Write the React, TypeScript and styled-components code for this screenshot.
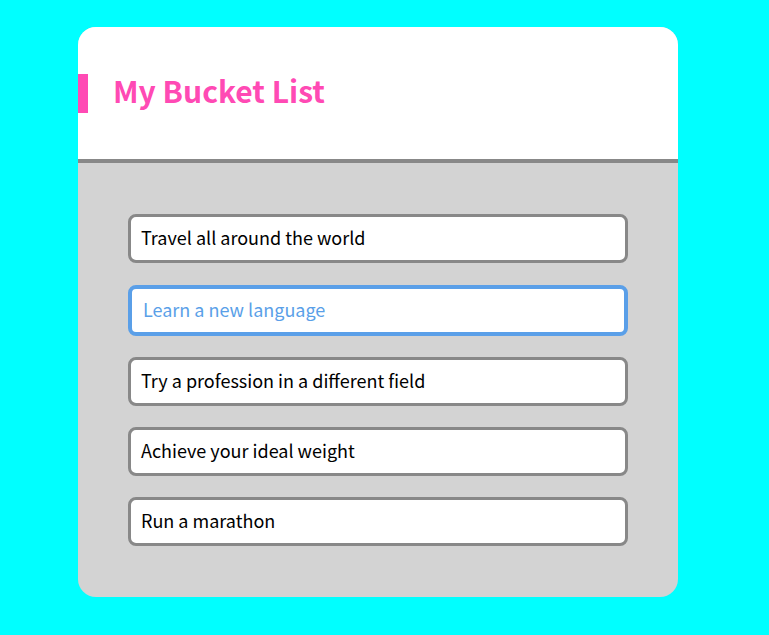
import React from "react";
import styled, { createGlobalStyle } from "styled-components";

const Global = createGlobalStyle`
  html, body { margin: 0; padding: 0; background: #00ffff; }
  body { font-family: "Noto Sans CJK KR", "Noto Sans", sans-serif; }
`;

const Page = styled.div`
  display: flex;
  justify-content: flex-start;
  padding: 27px 0 0 78px;
  min-height: 635px;
  box-sizing: border-box;
`;

const Card = styled.div`
  width: 600px;
  height: 570px;
  border-radius: 18px;
  overflow: hidden;
  display: flex;
  flex-direction: column;
  background: #d3d3d3;
`;

const Header = styled.header`
  height: 132px;
  background: #fff;
  border-bottom: 4px solid #888;
  display: flex;
  align-items: center;
  gap: 25px;
  flex-shrink: 0;
`;

const Accent = styled.div`
  width: 10px;
  height: 39px;
  background: #ff4ab4;
`;

const Title = styled.h1`
  margin: -7px 0 0;
  font-size: 30px;
  font-weight: 700;
  color: #ff4ab4;
  line-height: 1;
`;

const List = styled.ul`
  list-style: none;
  margin: 0;
  padding: 51px 50px 0;
  display: flex;
  flex-direction: column;
  gap: 21px;
`;

const Item = styled.li<{ $focused?: boolean }>`
  height: ${(p) => (p.$focused ? "51px" : "49px")};
  margin-top: ${(p) => (p.$focused ? "1px" : "0")};
  box-sizing: border-box;
  border: ${(p) => (p.$focused ? "4px solid #5a9fe8" : "3px solid #888")};
  border-radius: 8px;
  background: #fff;
  display: flex;
  align-items: center;
  padding: 0 0 4px ${(p) => (p.$focused ? "11px" : "10px")};
  font-size: 18px;
  color: ${(p) => (p.$focused ? "#5a9fe8" : "#000")};
`;

const items = [
  "Travel all around the world",
  "Learn a new language",
  "Try a profession in a different field",
  "Achieve your ideal weight",
  "Run a marathon",
];

export default function App() {
  return (
    <>
      <Global />
      <Page>
        <Card>
          <Header>
            <Accent />
            <Title>My Bucket List</Title>
          </Header>
          <List>
            {items.map((t, i) => (
              <Item key={t} $focused={i === 1}>
                {t}
              </Item>
            ))}
          </List>
        </Card>
      </Page>
    </>
  );
}
